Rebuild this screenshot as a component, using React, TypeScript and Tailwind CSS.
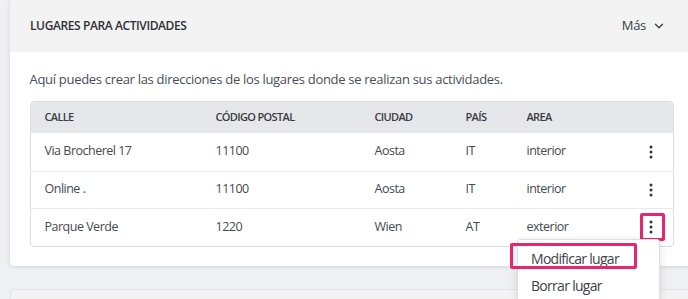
import React from "react";
import { ChevronDown } from "lucide-react";

const places = [
  { street: "Via Brocherel 17", zip: "11100", city: "Aosta", country: "IT", area: "interior" },
  { street: "Online .", zip: "11100", city: "Aosta", country: "IT", area: "interior" },
  { street: "Parque Verde", zip: "1220", city: "Wien", country: "AT", area: "exterior" },
];

const Kebab = () => (
  <svg width="4" height="14" viewBox="0 0 4 14" className="text-[#2f3540]">
    <circle cx="2" cy="2" r="1.5" fill="currentColor" />
    <circle cx="2" cy="7" r="1.5" fill="currentColor" />
    <circle cx="2" cy="12" r="1.5" fill="currentColor" />
  </svg>
);

export default function App() {
  return (
    <div
      className="relative h-[299px] w-[688px] overflow-hidden bg-[#eef0f4] pl-[10px]"
      style={{ fontFamily: '"Open Sans", "Noto Sans", sans-serif' }}
    >
      <div className="w-[683px] rounded-b-[4px] bg-white shadow-[0_1px_4px_rgba(0,0,0,0.12)]">
        <div className="flex h-[52px] items-center justify-between bg-[#f3f3f3] pl-[20px] pr-[27px]">
          <h2 className="text-[12px] font-semibold uppercase tracking-[-0.4px] text-[#2f3035]">
            Lugares para actividades
          </h2>
          <button className="flex items-center gap-[6px] text-[13px] tracking-[-0.3px] text-[#3a3d44]">
            Más
            <ChevronDown className="h-[14px] w-[14px]" strokeWidth={2.2} />
          </button>
        </div>
        <div className="px-[19.5px] pb-[19px] pt-[17px]">
          <p className="text-[13px] leading-[20px] tracking-[-0.3px] text-[#4a4d55]">
            Aquí puedes crear las direcciones de los lugares donde se realizan sus actividades.
          </p>
          <div className="mt-[12px] overflow-hidden rounded-[4px] border border-[#dcdde0]">
            <div className="flex h-[31px] items-center bg-[#e6e7ea] pl-[14px] text-[11px] font-semibold uppercase tracking-[-0.65px] text-[#3a3c42]">
              <div className="w-[171px]">Calle</div>
              <div className="w-[159px]">Código postal</div>
              <div className="w-[91px]">Ciudad</div>
              <div className="w-[61px]">País</div>
              <div className="flex-1">Area</div>
            </div>
            {places.map((p, i) => (
              <div
                key={p.street}
                className={`flex h-[37.5px] items-center pl-[14px] text-[12.5px] tracking-[-0.5px] text-[#464950] ${
                  i > 0 ? "border-t border-[#e8e9ec]" : ""
                }`}
              >
                <div className="w-[171px]">{p.street}</div>
                <div className="w-[159px]">{p.zip}</div>
                <div className="w-[91px]">{p.city}</div>
                <div className="w-[61px]">{p.country}</div>
                <div className="flex-1">{p.area}</div>
                <div className="flex w-[44px] justify-center">
                  <Kebab />
                </div>
              </div>
            ))}
          </div>
        </div>
      </div>
      <div className="mt-[23px] h-[40px] w-[683px] rounded-t-[4px] border border-[#e2e3e6] bg-[#f3f3f3]" />

      {/* highlight around kebab */}
      <div className="absolute left-[640px] top-[213px] h-[28px] w-[25px] rounded-[2px] border-[3px] border-[#e8266d]" />

      {/* dropdown menu */}
      <div className="absolute left-[517px] top-[239px] w-[143px] rounded-t-[3px] border border-[#dedfe2] bg-white pt-[5px] shadow-[0_2px_8px_rgba(0,0,0,0.12)]">
        <div className="flex h-[26px] items-center pl-[13px] text-[14px] tracking-[-0.7px] text-[#3f424a]">Modificar lugar</div>
        <div className="flex h-[28px] items-center pl-[13px] text-[14px] tracking-[-0.7px] text-[#3f424a]">Borrar lugar</div>
      </div>

      {/* highlight around first menu item */}
      <div className="absolute left-[510px] top-[243px] h-[26px] w-[127px] rounded-[2px] border-[3px] border-[#e8266d]" />
    </div>
  );
}
